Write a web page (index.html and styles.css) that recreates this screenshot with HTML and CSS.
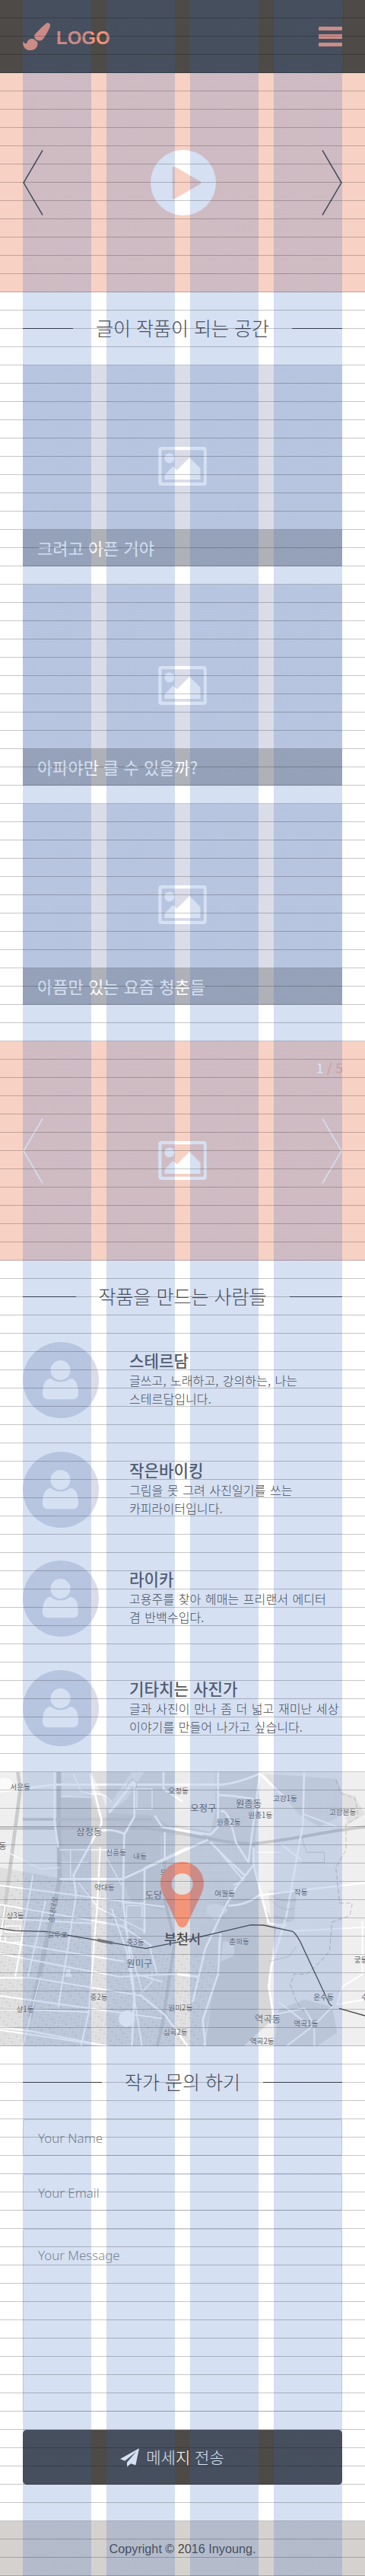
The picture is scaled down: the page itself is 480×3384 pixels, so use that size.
FILE: index.html
```html
<!DOCTYPE html>
<html lang="ko">
<head>
<meta charset="utf-8">
<title>Inyoung</title>
<link rel="stylesheet" href="styles.css">
</head>
<body>
<svg class="defs" width="0" height="0">
  <symbol id="picture" viewBox="624 620 192 154">
    <path fill-rule="evenodd" d="M636 620H804Q816 620 816 632V762Q816 774 804 774H636Q624 774 624 762V632Q624 620 636 620ZM640 633Q637 633 637 636V758Q637 761 640 761H801Q804 761 804 758V636Q804 633 801 633Z"/>
    <circle cx="668" cy="665" r="19.5"/>
    <path d="M649 750V732L682 698L698 712L748 662L791 705V750Z"/>
  </symbol>
  <symbol id="person" viewBox="90 68 300 300">
    <circle cx="238.500" cy="179" r="39"/>
    <path d="M168 272C168 240 176 213 200 211Q238 239 278 211C302 213 309 240 309 272Q309 294 288 294H190Q168 294 168 272Z"/>
  </symbol>
  <symbol id="prev" viewBox="0 0 27 88"><path d="M26 1.500L1 44L26 86.500" fill="none" stroke="currentColor" stroke-width="1.500"/></symbol>
  <symbol id="next" viewBox="0 0 27 88"><path d="M1 1.500L26 44L1 86.500" fill="none" stroke="currentColor" stroke-width="1.500"/></symbol>
</svg>

<header class="header">
  <a class="logo">
    <svg class="logo-icon" viewBox="90 90 108 108"><path d="M182 92C190 87 199 93 198 102C196 112 182 138 171 152C163 162 152 163 142 156C133 147 134 138 140 133C152 120 168 103 182 92Z"/><path d="M90 164C96 169 100 173 106 170C108 158 118 152 128 153C137 153 140 161 148 165C151 184 140 198 120 198C100 198 90 185 90 164Z"/></svg>
    <span class="logo-text">LOGO</span>
  </a>
  <div class="menu"><i></i><i></i><i></i></div>
</header>

<section class="hero">
  <svg class="arrow"><use href="#prev"/></svg>
  <svg class="play" viewBox="0 0 86 86"><circle cx="43" cy="43" r="43" fill="#fff"/><path d="M31 24L64 43L31 62Z" fill="#f7d1c4" stroke="#f7d1c4" stroke-width="4.500" stroke-linejoin="round"/></svg>
  <svg class="arrow"><use href="#next"/></svg>
</section>

<h2 class="title"><span>글이 작품이 되는 공간</span></h2>
<section class="cards">
  <article class="card"><div class="thumb"><svg class="picture"><use href="#picture"/></svg></div><p class="caption">크려고 아픈 거야</p></article>
  <article class="card"><div class="thumb"><svg class="picture"><use href="#picture"/></svg></div><p class="caption">아파야만 클 수 있을까?</p></article>
  <article class="card"><div class="thumb"><svg class="picture"><use href="#picture"/></svg></div><p class="caption">아픔만 있는 요즘 청춘들</p></article>
</section>

<section class="hero slider">
  <svg class="arrow"><use href="#prev"/></svg>
  <svg class="picture"><use href="#picture"/></svg>
  <svg class="arrow"><use href="#next"/></svg>
  <p class="counter"><b>1</b> / 5</p>
</section>

<h2 class="title"><span>작품을 만드는 사람들</span></h2>
<section class="people">
  <article class="person"><svg class="avatar"><use href="#person"/></svg><div><h3>스테르담</h3><p>글쓰고, 노래하고, 강의하는, 나는<br>스테르담입니다.</p></div></article>
  <article class="person"><svg class="avatar"><use href="#person"/></svg><div><h3>작은바이킹</h3><p>그림을 못 그려 사진일기를 쓰는<br>카피라이터입니다.</p></div></article>
  <article class="person"><svg class="avatar"><use href="#person"/></svg><div><h3>라이카</h3><p>고용주를 찾아 헤매는 프리랜서 에디터<br>겸 반백수입다.</p></div></article>
  <article class="person"><svg class="avatar"><use href="#person"/></svg><div><h3>기타치는 사진가</h3><p>글과 사진이 만나 좀 더 넓고 재미난 세상<br>이야기를 만들어 나가고 싶습니다.</p></div></article>
</section>

<svg class="map" viewBox="0 54 1440 1080">
  <defs>
    <pattern id="blocks" width="46" height="38" patternUnits="userSpaceOnUse" patternTransform="rotate(9)"><path d="M0 0H46M0 13H46M0 26H46M0 0V38M15 0V38M31 0V38" stroke="#e9e9e9" stroke-width="1.500" fill="none"/><path d="M3 3h9v7h-9zM20 16h8v7h-8zM34 29h9v6h-9z" fill="#d2d2d2"/></pattern>
    <pattern id="lots" width="36" height="30" patternUnits="userSpaceOnUse"><path d="M0 0H36M0 10H36M0 20H36M0 0V30M12 0V30M24 0V30" stroke="#e8e8e8" stroke-width="1.500" fill="none"/></pattern>
  </defs>
  <rect y="54" width="1440" height="1080" fill="#efefef"/>
  <path d="M232 54H1030L1000 410L1060 640L860 720V840L800 1134H0V430L230 470Z" fill="#dedede"/>
  <path d="M240 54H360L400 140L440 170L520 54H570L500 160L430 215L400 145L240 150ZM690 54H850V200L830 290L690 260Z" fill="#ececec"/>
  <path d="M235 150L360 150L400 250L430 215L610 225L700 290L650 600L520 570L480 470L300 470L235 350Z" fill="#d6d6d6"/>
  <path d="M840 570L1020 540L1090 670L1060 860L1075 1030L960 1134H810L845 880L870 720Z" fill="#d7d7d7"/>
  <path d="M1100 990L1200 950L1310 980L1330 1080L1250 1134H1080Z" fill="#dedede"/>
  <path d="M1060 520L1170 530L1160 640L1070 660ZM1040 60L1330 80L1370 210L1260 270L1180 220ZM1340 130L1400 150L1440 220L1370 260Z" fill="#e1e1e1"/>
  <path d="M30 440L235 470L480 570L570 740L860 800L780 1134H0V600Z" fill="url(#blocks)"/>
  <path d="M630 300L1000 330L930 480L870 590L760 700L640 620ZM710 60L1020 60L960 150L830 140ZM250 360H480V470H290ZM1200 110L1310 120L1330 260L1200 230Z" fill="url(#lots)"/>
  <path d="M815 580Q870 560 900 600L850 640L815 610ZM880 720Q940 720 920 780L870 800Z" fill="#eaeaea"/>
  <g fill="none" stroke="#cbcbcb" stroke-width="18">
    <path d="M70 54L80 120L48 370L10 660" stroke-width="14"/>
    <path d="M232 54V240L235 480L120 1020"/>
    <path d="M0 275H560C700 280 850 335 1000 335C1150 325 1280 285 1440 270" stroke-width="12"/>
    <path d="M90 240H600" stroke-width="10"/>
    <path d="M650 300V560L690 720L640 1050L620 1134" stroke-width="12"/>
  </g>
  <g fill="none" stroke="#fff" stroke-width="8" stroke-linejoin="round">
    <path d="M0 130L215 103H870Q930 100 1025 60L1120 150"/>
    <path d="M215 54V250L230 350M235 475H485L820 320M355 60L380 160L400 240V260L350 350L290 460L300 540M640 270L830 300L860 270V54"/>
    <path d="M870 210Q900 190 930 330L980 410L1025 60M860 145Q920 145 1000 160M830 330L900 400L970 465M1000 350V420L930 510L880 600L810 750L760 960"/>
    <path d="M530 90L430 215M530 90V230L490 300L485 560L530 930L520 1134M570 430V690M645 54V120L720 170M650 290V400M610 225L640 270L800 300M395 285Q450 275 495 300"/>
    <path d="M1200 54L1195 260L1130 620L1070 820L1060 900L1080 1020M1000 420L1060 650L1130 660M900 580Q970 580 1020 540L1140 525L1440 490"/>
    <path d="M870 690L860 850L800 1030L810 1134M700 850L780 860M550 930L650 1010L740 1134"/>
  </g>
  <g fill="none" stroke="#fff" stroke-width="6">
    <path d="M0 500L650 585M0 575L480 660L600 740M0 630L360 650M0 720L490 800M0 770L470 860L690 850M0 865H130L560 935M0 935L640 1025M0 990H110L350 1000M0 1070L400 1130"/>
    <path d="M130 460L60 860M180 560L110 860M300 540L230 980M395 350L385 560L350 1000L320 1134M440 590L500 760L560 1134M490 650L540 850L640 880M590 740L620 850M0 1060L120 1075L430 1134M20 580L0 720M1200 220L1330 270M1110 340L1190 400M850 350L960 480L920 500M1080 1010L1200 985L1240 1050V1134M1100 960L1230 1060M1430 640V850L1350 900L1330 970L1440 950M1310 980L1240 1050L1130 1134M1130 682L1440 665"/>
    <path d="M20 660h60v24h-60zM20 700h65v24h-65zM540 120h60v80h-60zM278 360v110M240 410h108M500 580h60v50h-60z" stroke-width="4"/>
    <path d="M290 60L320 130L360 140Q410 130 440 170M235 360H480M240 150L360 153M420 390L480 500M570 570H480M310 490L390 590L570 680M570 430L740 350M40 375L160 435L235 430M90 1134L160 860M540 840L560 920L600 880V840M1010 370H1110" stroke-width="4"/>
  </g>
  <g fill="none" stroke="#bdbdbd" stroke-width="2">
    <path d="M1325 85L1350 140L1400 155L1415 230L1365 260V360L1325 430L1340 570H1390L1380 620L1310 645L1300 760L1255 810L1210 850H1160L1145 890L1170 960L1210 1010" stroke-width="3" stroke-dasharray="18 9"/>
    <path d="M1190 310L1210 370H1280V410H1190M1060 800L1140 780L1170 740M500 110Q520 60 540 100Q540 130 510 110"/>
    <path d="M1070 540Q1110 570 1170 560M1070 560Q1120 610 1160 590M1080 620L1140 640"/>
  </g>
  <circle cx="500" cy="1026" r="32" fill="#fff"/>
  <path d="M260 830h18v15l8 15h-30l6-15zM0 80Q45 70 50 100T0 125" fill="#fafafa"/>
  <path d="M0 670L60 679L180 682L575 749L700 724L990 656L1040 657L1155 682Q1175 697 1200 755L1300 968L1310 976M1338 985L1440 1014" fill="none" stroke="#4d4a47" stroke-width="4"/>
  <path d="M385 716L445 728" stroke="#777" stroke-width="11"/>
  <g class="map-labels" text-anchor="middle">
    <text x="80" y="124">서운동</text><text x="704" y="139">오정동</text><text x="1125" y="167">고강1동</text><text x="1352" y="221">고강본동</text><text x="1027" y="235">원종1동</text><text x="902" y="262">원종2동</text>
    <text x="458" y="382">신흥동</text><text x="552" y="395">내동</text><text x="412" y="518">약대동</text><text x="887" y="544">여월동</text><text x="1187" y="536">작동</text><text x="60" y="631">상3동</text><text x="227" y="704">길주로</text><text x="534" y="734">중3동</text><text x="944" y="733">춘의동</text><text x="1424" y="805">궁동</text>
    <text x="390" y="951">중2동</text><text x="99" y="998">상1동</text><text x="712" y="994">원미2동</text><text x="692" y="1090">심곡2동</text><text x="1034" y="1124">역곡2동</text><text x="1207" y="1055">역곡1동</text><text x="1277" y="952">온수동</text><text x="1438" y="950">수</text><text x="645" y="460">도</text><text x="10" y="356" font-size="32">동</text>
    <text transform="translate(220 598) rotate(-80)">송내대로</text>
    <g class="map-big"><text x="352" y="303">삼정동</text><text x="802" y="211">오정구</text><text x="981" y="192">원종동</text><text x="606" y="553">도당</text><text x="550" y="822">원미구</text><text x="1056" y="1041">역곡동</text></g>
    <text class="map-city" x="720" y="732">부천시</text>
  </g>
  <path fill="#f39578" fill-rule="evenodd" d="M719 408C767 408 804 446 804 493C804 520 790 544 779 567L738 653Q730 666 719 666Q707 666 700 653L659 567C648 544 633 520 633 493C633 446 671 408 719 408ZM719 453A42 42 0 1 0 719 537A42 42 0 1 0 719 453Z"/>
</svg>

<h2 class="title"><span>작가 문의 하기</span></h2>
<form class="form">
  <input class="field" type="text" placeholder="Your Name">
  <input class="field" type="text" placeholder="Your Email">
  <textarea class="field message" placeholder="Your Message"></textarea>
  <button class="send" type="button">
    <svg class="plane" viewBox="477 225 75 74"><path d="M552 225L538 292L519 285L504 299V281L541 238L496 275L477 267Z"/></svg>
    <span>메세지 전송</span>
  </button>
</form>

<footer class="footer">Copyright © 2016 Inyoung.</footer>
</body>
</html>
```
FILE: styles.css
```css
* { box-sizing: border-box; margin: 0; padding: 0; }
body {
  position: relative;
  width: 480px;
  background: #fff;
  color: #4d4a47;
  font-family: "Noto Sans CJK KR", sans-serif;
}
/* layout grid: four columns and a 24px baseline */
body::after {
  content: "";
  position: absolute;
  inset: 0;
  pointer-events: none;
  background:
    linear-gradient(transparent 23px, rgba(0, 0, 0, .22) 23px) 0 0 / 100% 24px,
    linear-gradient(90deg,
      transparent 30px, rgba(45, 100, 190, .2) 30px 120px,
      transparent 120px 140px, rgba(45, 100, 190, .2) 140px 230px,
      transparent 230px 250px, rgba(45, 100, 190, .2) 250px 340px,
      transparent 340px 360px, rgba(45, 100, 190, .2) 360px 450px,
      transparent 450px);
}
.defs { position: absolute; }
svg { display: block; }

.header { display: flex; align-items: center; justify-content: space-between; height: 96px; padding: 0 30px; background: #4d4a47; }
.logo { display: flex; align-items: center; gap: 8px; }
.logo-icon { width: 36px; height: 36px; fill: #f39578; }
.logo-text { padding-top: 3px; font: bold 24px/28px "Liberation Sans", sans-serif; color: #f39578; }
.menu { display: flex; flex-direction: column; gap: 5px; width: 31px; }
.menu i { height: 5.400px; border-radius: 1px; background: #f39578; }

.hero { position: relative; display: flex; align-items: center; justify-content: space-between; height: 288px; padding: 0 30px; background: #f7d1c4; }
.arrow { width: 27px; height: 88px; color: #4d4a47; }
.play { width: 86px; height: 86px; margin-left: 2px; }
.slider { margin-top: 48px; }
.slider .arrow { color: #fff; }
.slider .picture { margin-top: 25px; }
.counter { position: absolute; top: 23px; right: 29px; font-size: 17px; line-height: 24px; color: #f0a896; }
.counter b { color: #fff; font-weight: 500; }

.title { display: flex; align-items: center; gap: 30px; height: 95px; margin-bottom: 1px; padding: 0 30px; font-size: 25px; font-weight: 300; white-space: nowrap; }
.title span { padding-bottom: 3px; }
.title::before, .title::after { content: ""; flex: 1; height: 1px; background: #4d4a47; }

.cards { display: flex; flex-direction: column; gap: 24px; padding: 0 30px; }
.card { height: 264px; background: #dadde8; display: grid; grid-template-rows: 216px 48px; }
.thumb { display: flex; justify-content: center; padding-top: 107px; }
.picture { width: 64px; height: 51px; fill: #fff; }
.caption { padding-left: 19px; background: rgba(77, 75, 72, .3); color: #fff; font-size: 22px; line-height: 46px; white-space: nowrap; }

.people { display: flex; flex-direction: column; gap: 43.700px; height: 576px; padding: 11px 30px 0; }
.person { display: flex; gap: 40px; height: 100px; }
.avatar { flex: none; width: 100px; height: 100px; border-radius: 50%; background: #dadde8; fill: #fff; }
.person h3 { padding-top: 9px; font-size: 21.200px; font-weight: 500; line-height: 29px; color: #5c5c60; }
.person p { font-size: 16.100px; font-weight: 300; line-height: 24px; word-spacing: 1px; white-space: nowrap; }

.map { width: 480px; height: 360px; }
.map-labels { font-size: 29px; fill: #68686b; stroke: #eee; stroke-width: 2px; paint-order: stroke; }
.map-big { font-size: 37px; }
.map-city { font-size: 53px; font-weight: 500; fill: #4d4a47; }

.form { display: flex; flex-direction: column; gap: 24px; padding: 0 30px; }
.field { display: block; width: 100%; height: 48px; padding: 0 19px; border: 1px solid #d9dde8; border-radius: 3px; background: none; font: 300 16.900px/24px "Noto Sans", sans-serif; resize: none; outline: 0; }
.field::placeholder { color: #8c8a88; opacity: 1; }
.message { height: 240px; padding-top: 22px; }
.send { display: flex; align-items: center; justify-content: center; gap: 9px; height: 72px; padding-right: 27px; border: 0; border-radius: 5px; background: #4d4a47; color: #fff; font: 300 21px/30px "Noto Sans CJK KR", sans-serif; }
.send span { padding-bottom: 2px; }
.plane { width: 25px; height: 25px; fill: #fff; }

.footer { height: 72px; margin-top: 48px; background: #d5d1cf; color: #4d4a47; font: 16.200px/73px "Liberation Sans", sans-serif; text-align: center; }
```
